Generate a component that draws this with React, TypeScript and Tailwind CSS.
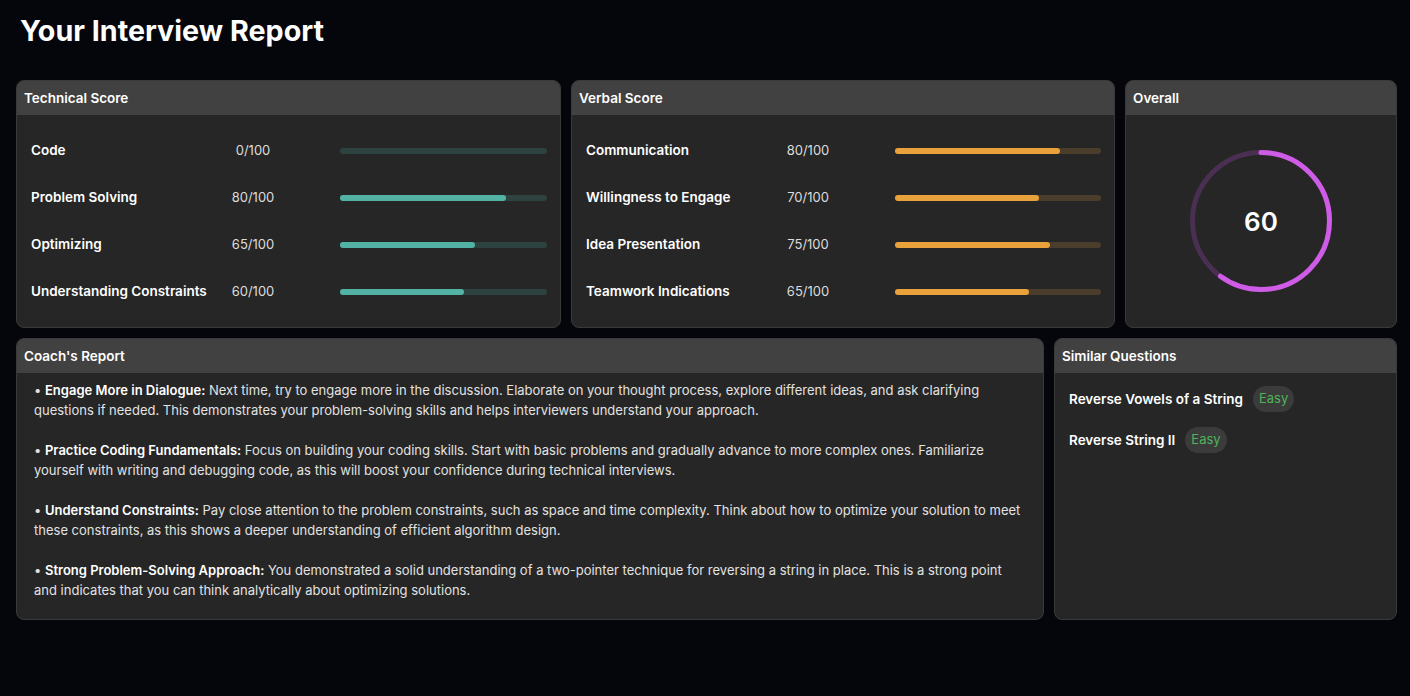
import React from "react";

type Score = { label: string; value: number };

const technical: Score[] = [
  { label: "Code", value: 0 },
  { label: "Problem Solving", value: 80 },
  { label: "Optimizing", value: 65 },
  { label: "Understanding Constraints", value: 60 },
];

const verbal: Score[] = [
  { label: "Communication", value: 80 },
  { label: "Willingness to Engage", value: 70 },
  { label: "Idea Presentation", value: 75 },
  { label: "Teamwork Indications", value: 65 },
];

// lines split where the report wraps them
const tips = [
  {
    title: "Engage More in Dialogue:",
    first: "Next time, try to engage more in the discussion. Elaborate on your thought process, explore different ideas, and ask clarifying",
    rest: "questions if needed. This demonstrates your problem-solving skills and helps interviewers understand your approach.",
  },
  {
    title: "Practice Coding Fundamentals:",
    first: "Focus on building your coding skills. Start with basic problems and gradually advance to more complex ones. Familiarize",
    rest: "yourself with writing and debugging code, as this will boost your confidence during technical interviews.",
  },
  {
    title: "Understand Constraints:",
    first: "Pay close attention to the problem constraints, such as space and time complexity. Think about how to optimize your solution to meet",
    rest: "these constraints, as this shows a deeper understanding of efficient algorithm design.",
  },
  {
    title: "Strong Problem-Solving Approach:",
    first: "You demonstrated a solid understanding of a two-pointer technique for reversing a string in place. This is a strong point",
    rest: "and indicates that you can think analytically about optimizing solutions.",
  },
];

const similar = ["Reverse Vowels of a String", "Reverse String II"];

const Card: React.FC<{ title: string; className?: string; children: React.ReactNode }> = ({
  title,
  className = "",
  children,
}) => (
  <div className={`flex flex-col rounded-lg border border-[#3a3a3a] bg-[#262626] overflow-hidden ${className}`}>
    <div className="h-[34px] flex items-center px-[7px] bg-[#414141] text-[13.5px] font-semibold text-white">
      {title}
    </div>
    <div className="flex-1">{children}</div>
  </div>
);

const ScoreRows: React.FC<{ items: Score[]; fill: string; track: string }> = ({ items, fill, track }) => (
  <div className="py-[12px] pl-[14px] pr-[13px]">
    {items.map((s) => (
      <div key={s.label} className="h-[47px] flex items-center">
        <span className="w-[170px] whitespace-nowrap text-[13.5px] font-semibold text-white">{s.label}</span>
        <span className="w-[104px] text-center text-[13px] text-[#dcdcdc]">{s.value}/100</span>
        <div className={`ml-[35px] flex-1 h-[6px] rounded-full ${track}`}>
          {/* fill width comes from the score */}
          <div className={`h-full rounded-full ${fill}`} style={{ width: `${s.value}%` }} />
        </div>
      </div>
    ))}
  </div>
);

const Ring: React.FC<{ value: number }> = ({ value }) => {
  const r = 68.5;
  const c = 2 * Math.PI * r;
  return (
    <div className="relative w-[146px] h-[146px]">
      <svg width="146" height="146" viewBox="0 0 146 146" className="-rotate-90">
        <circle cx="73" cy="73" r={r} fill="none" stroke="#4a2f52" strokeWidth="5" />
        <circle
          cx="73"
          cy="73"
          r={r}
          fill="none"
          stroke="#cf5ce6"
          strokeWidth="5"
          strokeLinecap="round"
          strokeDasharray={`${(c * value) / 100} ${c}`}
        />
      </svg>
      <span className="absolute inset-0 flex items-center justify-center text-[26px] font-semibold text-white">
        {value}
      </span>
    </div>
  );
};

export default function App() {
  return (
    <div className="min-h-[696px] bg-[#05060b] pl-[16px] pr-[13px] font-['Inter',sans-serif]">
      <h1 className="pt-[13px] pl-[4px] h-[80px] text-[28.7px] leading-[36px] font-bold text-white">
        Your Interview Report
      </h1>

      <div className="grid grid-cols-[545px_544px_1fr] gap-[10px]">
        <Card title="Technical Score">
          <ScoreRows items={technical} fill="bg-[#52b3a4]" track="bg-[#2e423f]" />
        </Card>
        <Card title="Verbal Score">
          <ScoreRows items={verbal} fill="bg-[#e9a23b]" track="bg-[#4a3d2b]" />
        </Card>
        <Card title="Overall">
          <div className="h-full flex items-center justify-center">
            <Ring value={60} />
          </div>
        </Card>
      </div>

      <div className="grid grid-cols-[1028px_1fr] gap-[10px] mt-[10px]">
        <Card title="Coach's Report">
          <div className="pt-[7px] pb-[19px] pl-[17px] pr-[6px] space-y-5 text-[13px] leading-[20px] text-[#e2e2e2]">
            {tips.map((t) => (
              <p key={t.title} className="whitespace-nowrap">
                • <b className="font-semibold text-white">{t.title}</b> {t.first}
                <br />
                {t.rest}
              </p>
            ))}
          </div>
        </Card>
        <Card title="Similar Questions">
          <div className="pt-[13px] pl-[14px] flex flex-col gap-[15px]">
            {similar.map((q) => (
              <div key={q} className="flex items-center gap-[10px]">
                <span className="text-[13.5px] font-semibold text-white">{q}</span>
                <span className="h-[26px] px-[6px] flex items-center rounded-full bg-[#3b3b3b] text-[13px] text-[#4fb459]">
                  Easy
                </span>
              </div>
            ))}
          </div>
        </Card>
      </div>
    </div>
  );
}
